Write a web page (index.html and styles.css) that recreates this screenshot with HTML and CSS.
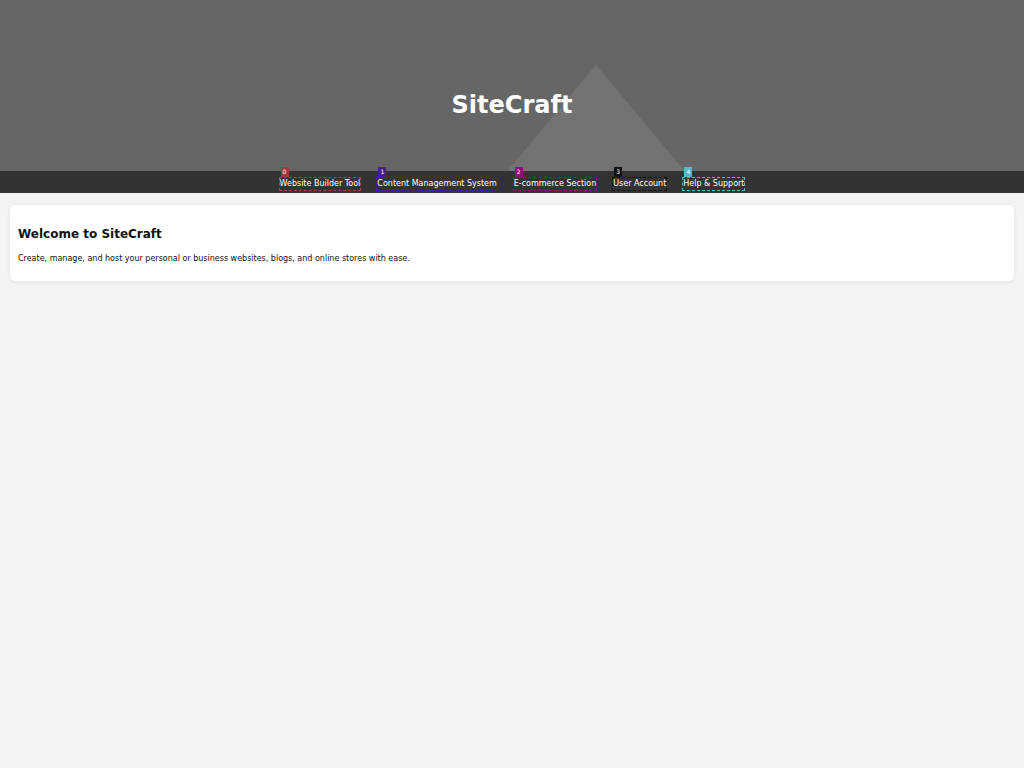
FILE: index.html
```html
<!DOCTYPE html>
<html lang="en">
<head>
<meta charset="utf-8">
<title>SiteCraft</title>
<link rel="stylesheet" href="styles.css">
</head>
<body>
<header class="hero">
  <div class="hero-shape"></div>
  <h1 class="hero-title">SiteCraft</h1>
</header>
<nav class="nav">
  <a class="nav-item c0" href="#"><span class="tag">0</span>Website Builder Tool</a>
  <a class="nav-item c1" href="#"><span class="tag">1</span>Content Management System</a>
  <a class="nav-item c2" href="#"><span class="tag">2</span>E-commerce Section</a>
  <a class="nav-item c3" href="#"><span class="tag">3</span>User Account</a>
  <a class="nav-item c4" href="#"><span class="tag">4</span>Help &amp; Support</a>
</nav>
<main class="main">
  <section class="card">
    <h2 class="card-title">Welcome to SiteCraft</h2>
    <p class="card-text">Create, manage, and host your personal or business websites, blogs, and online stores with ease.</p>
  </section>
</main>
</body>
</html>
```
FILE: styles.css
```css
* { box-sizing: border-box; }
html, body {
  margin: 0;
  padding: 0;
  background: #f3f3f3;
  font-family: "DejaVu Sans", sans-serif;
  color: #111;
}
.hero {
  position: relative;
  height: 171px;
  background: #666666;
  display: flex;
  align-items: center;
  justify-content: center;
  overflow: hidden;
}
.hero-shape {
  position: absolute;
  top: 65px;
  left: 504px;
  width: 184px;
  height: 110px;
  background: #737373;
  clip-path: polygon(50% 0, 100% 100%, 0 100%);
}
.hero-title {
  position: relative;
  margin: 38px 0 0;
  font-size: 24px;
  line-height: 28px;
  font-weight: bold;
  color: #ffffff;
}
.nav {
  height: 22px;
  background: #333333;
  display: flex;
  justify-content: center;
  align-items: center;
  gap: 15px;
  padding-top: 4px;
}
.nav-item {
  position: relative;
  color: #ffffff;
  text-decoration: none;
  font-size: 8px;
  line-height: 12px;
  padding: 0;
  border: 1px dashed;
}
.tag {
  position: absolute;
  left: 1px;
  top: -11px;
  min-width: 8px;
  height: 10px;
  padding: 0 1px;
  font-size: 6px;
  line-height: 10px;
  text-align: center;
  color: #fff;
}
.c0 { border-color: #a04848; }
.c0 .tag { background: #9a3c3c; }
.c1 { border-color: #4a1a9a; }
.c1 .tag { background: #4a1a9a; }
.c2 { border-color: #8a1080; }
.c2 .tag { background: #8a1080; }
.c3 { border-color: #111111; }
.c3 .tag { background: #111111; }
.c4 { border-color: #5ab8c8; }
.c4 .tag { background: #5ab8c8; }
.main {
  padding: 12px 10px;
}
.card {
  background: #ffffff;
  border-radius: 5px;
  box-shadow: 0 1px 4px rgba(0,0,0,0.08);
  padding: 8px;
  height: 76px;
}
.card-title {
  margin: 14px 0 0;
  font-size: 12px;
  line-height: 14px;
  font-weight: bold;
}
.card-text {
  margin: 13px 0 0;
  font-size: 8px;
  line-height: 10px;
}
```
